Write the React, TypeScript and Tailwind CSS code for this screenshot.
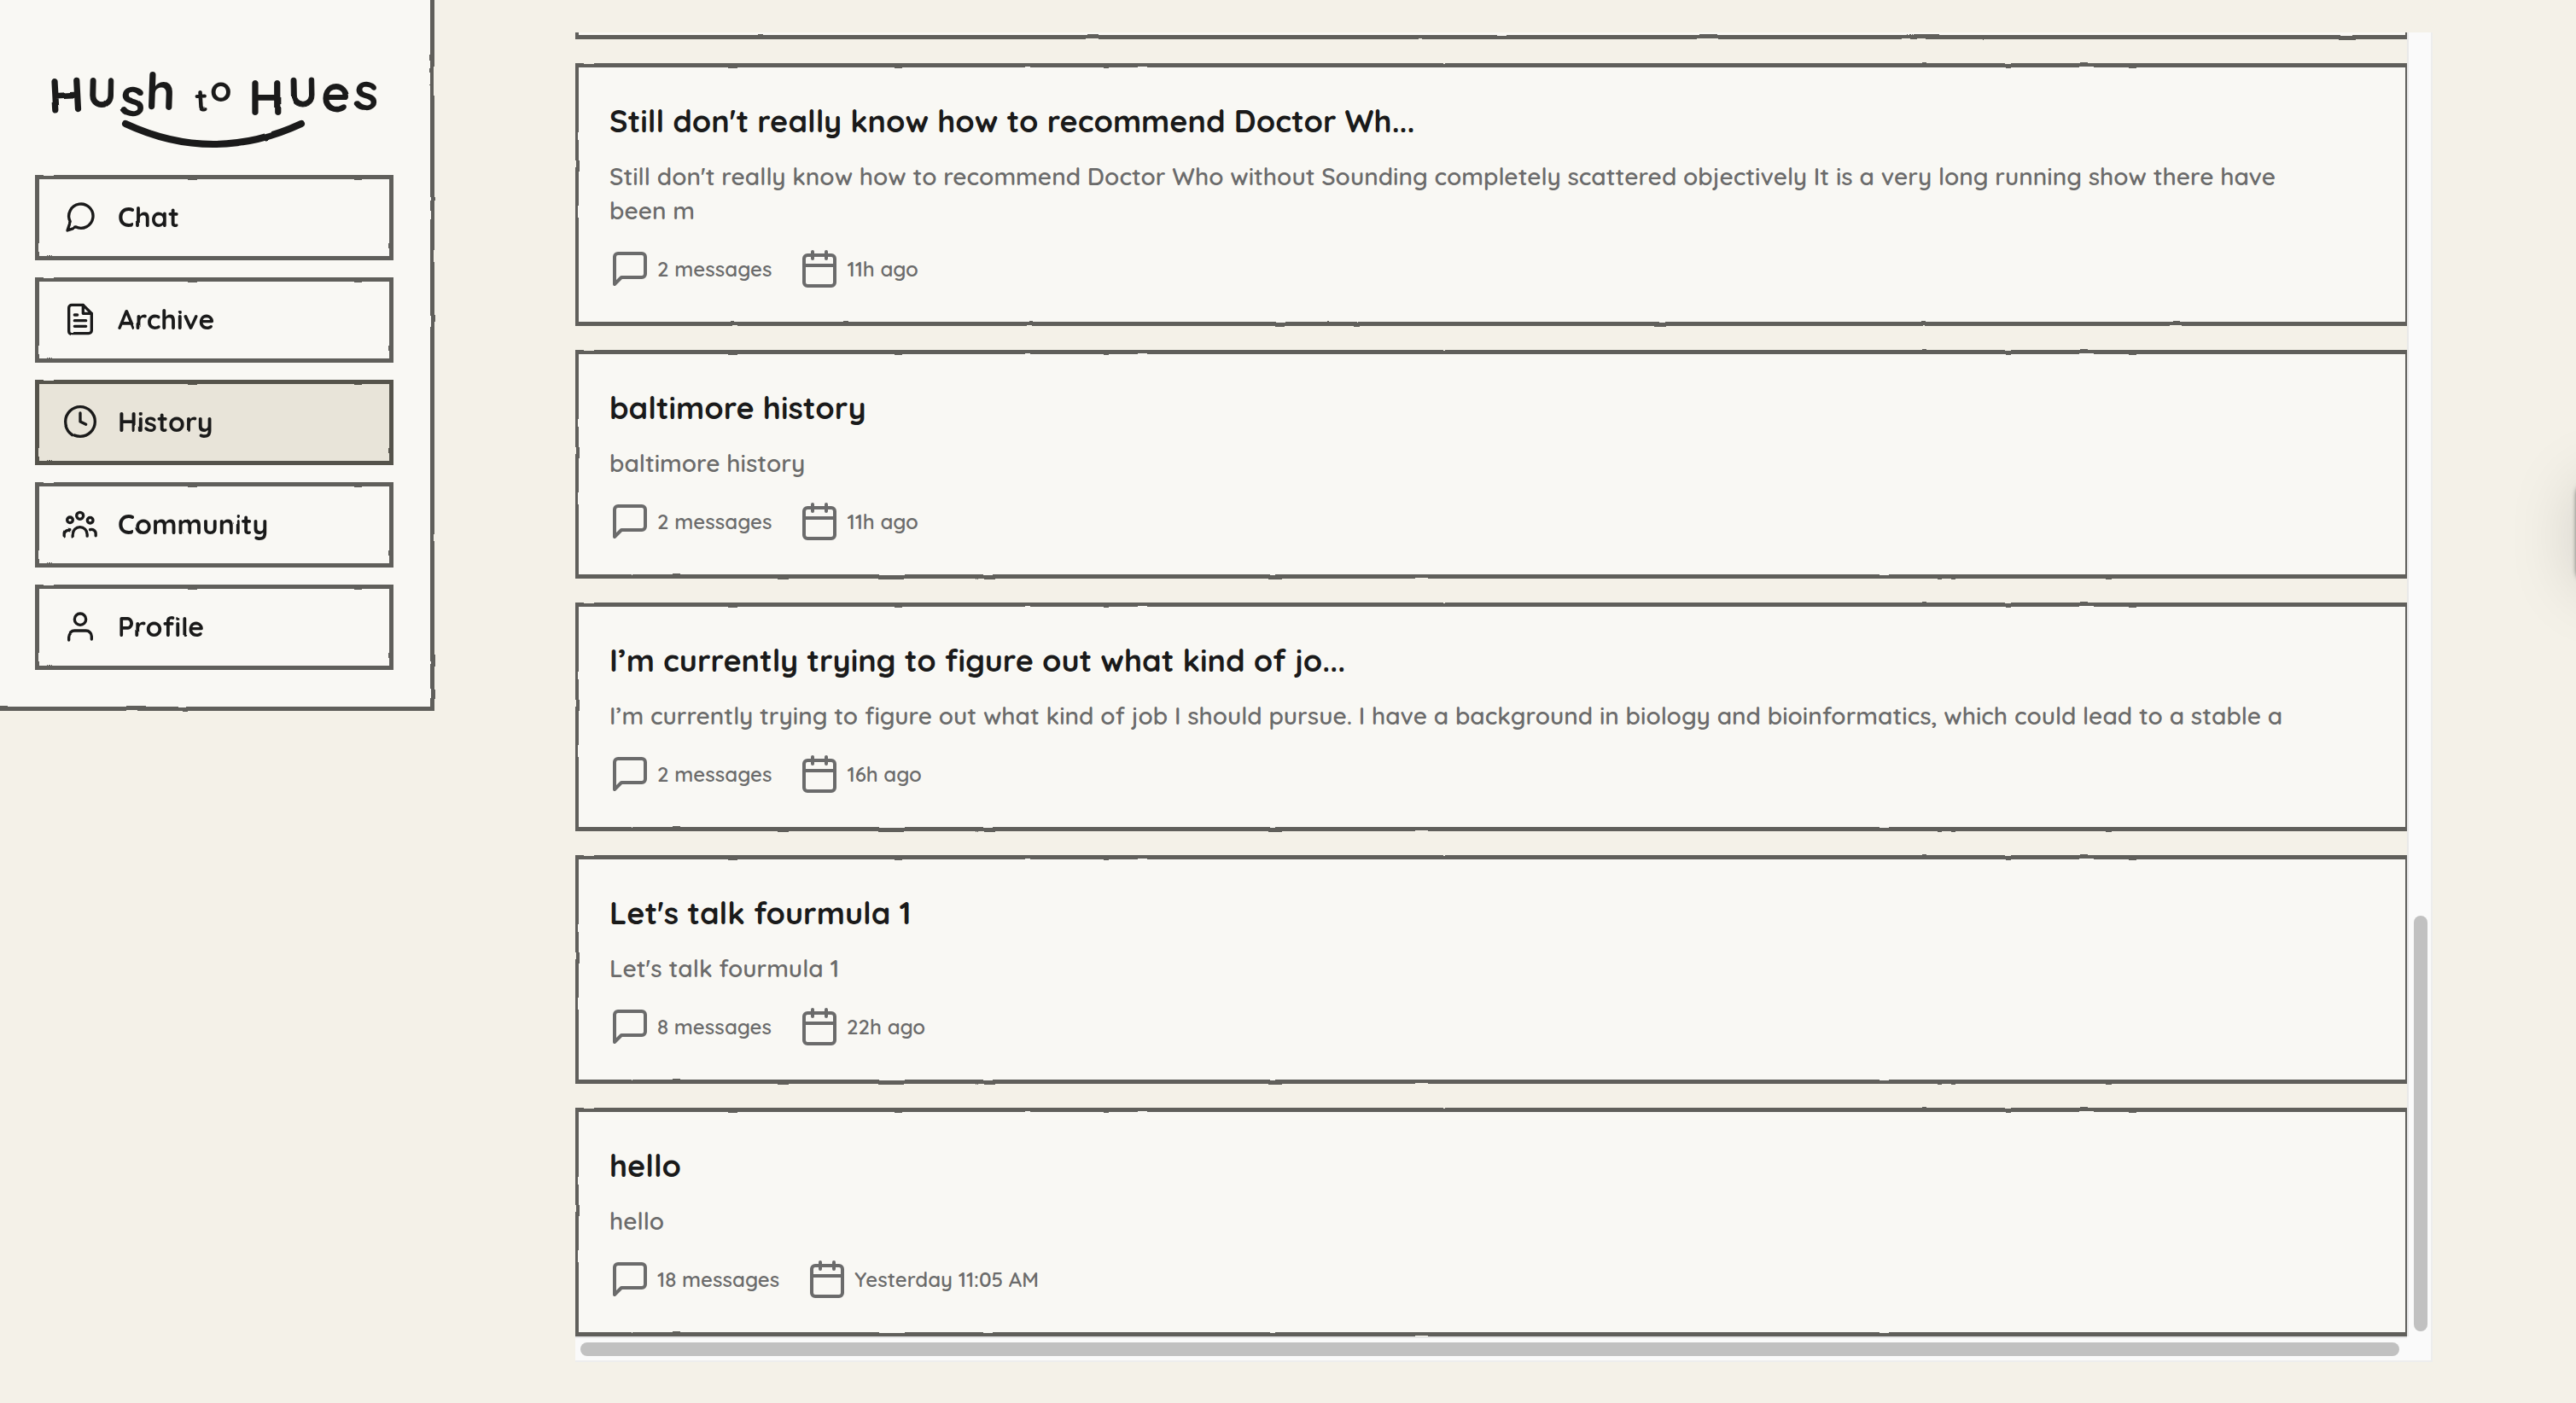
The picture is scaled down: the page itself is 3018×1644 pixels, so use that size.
import type { ReactNode } from "react"

interface NavItem {
  label: string
  icon: ReactNode
  active?: boolean
}

interface Conversation {
  title: string
  preview: string
  messages: string
  time: string
}

const navItems: NavItem[] = [
  { label: "Chat", icon: <path d="m3 21 1.9-5.7a8.5 8.5 0 1 1 3.8 3.8z" /> },
  {
    label: "Archive",
    icon: (
      <>
        <path d="M14 2H6a2 2 0 0 0-2 2v16a2 2 0 0 0 2 2h12a2 2 0 0 0 2-2V8z" />
        <path d="M14 2v6h6M8 9h2M8 13h8M8 17h8" />
      </>
    ),
  },
  {
    label: "History",
    active: true,
    icon: (
      <>
        <circle cx="12" cy="12" r="10.4" />
        <path d="M12 6v6l4 2" />
      </>
    ),
  },
  {
    label: "Community",
    icon: (
      <>
        <circle cx="11.8" cy="6.2" r="2.4" />
        <circle cx="4.8" cy="9.2" r="2" />
        <circle cx="19" cy="9.4" r="2" />
        <path d="M6.7 20.5v-1.2a5 5 0 0 1 10.2 0v1.2" />
        <path d="M.7 20.3v-1.3a3 3 0 0 1 4-3M22.9 20.3v-1.3a3 3 0 0 0-4-3" />
      </>
    ),
  },
  {
    label: "Profile",
    icon: (
      <>
        <path d="M20 21v-2a4 4 0 0 0-4-4H8a4 4 0 0 0-4 4v2" />
        <circle cx="12" cy="7" r="4" />
      </>
    ),
  },
]

const conversations: Conversation[] = [
  {
    title: "Still don't really know how to recommend Doctor Wh...",
    preview:
      "Still don't really know how to recommend Doctor Who without Sounding completely scattered objectively It is a very long running show there have been m",
    messages: "2 messages",
    time: "11h ago",
  },
  { title: "baltimore history", preview: "baltimore history", messages: "2 messages", time: "11h ago" },
  {
    title: "I’m currently trying to figure out what kind of jo...",
    preview:
      "I’m currently trying to figure out what kind of job I should pursue. I have a background in biology and bioinformatics, which could lead to a stable a",
    messages: "2 messages",
    time: "16h ago",
  },
  { title: "Let's talk fourmula 1", preview: "Let's talk fourmula 1", messages: "8 messages", time: "22h ago" },
  { title: "hello", preview: "hello", messages: "18 messages", time: "Yesterday 11:05 AM" },
]

// Each letter of the wordmark sits at its own height and tilt
const logoLetters = [
  { char: "H", x: 17, y: 82, size: 58, tilt: -3 },
  { char: "U", x: 61, y: 74, size: 48, tilt: 1 },
  { char: "s", x: 99, y: 84, size: 62, tilt: 2 },
  { char: "h", x: 129, y: 77, size: 60, tilt: 2 },
  { char: "t", x: 188, y: 80, size: 38, tilt: -3 },
  { char: "o", x: 205, y: 68, size: 41, tilt: 0 },
  { char: "H", x: 250, y: 84, size: 58, tilt: 0 },
  { char: "U", x: 297, y: 74, size: 48, tilt: -1 },
  { char: "e", x: 335, y: 80, size: 60, tilt: 0 },
  { char: "s", x: 373, y: 77, size: 60, tilt: 2 },
]

function RoughFilters() {
  return (
    <svg className="absolute h-0 w-0" aria-hidden="true">
      <filter id="rough" x="-2%" y="-2%" width="104%" height="104%" colorInterpolationFilters="sRGB">
        <feTurbulence type="fractalNoise" baseFrequency="0.02" numOctaves="3" seed="2" result="noise" />
        <feDisplacementMap in="SourceGraphic" in2="noise" scale="2" xChannelSelector="R" yChannelSelector="G" />
      </filter>
    </svg>
  )
}

function Logo() {
  return (
    <svg
      viewBox="0 0 420 140"
      className="h-[140px] w-[420px] [filter:url(#rough)]"
      role="img"
      aria-label="Hush to Hues"
    >
      <g className="fill-[#1a1a1a] font-bold">
        {logoLetters.map((l, i) => (
          <text
            key={i}
            fontSize={l.size}
            stroke="#1a1a1a"
            strokeWidth={l.char === "U" ? 1 : 0}
            transform={`translate(${l.x} ${l.y}) rotate(${l.tilt})`}
          >
            {l.char}
          </text>
        ))}
      </g>
      <path d="M106 94Q209 142 312 94" fill="none" stroke="#1a1a1a" strokeWidth="8" strokeLinecap="round" />
    </svg>
  )
}

function NavButton({ item }: { item: NavItem }) {
  return (
    <button
      type="button"
      className={`flex h-[100px] w-full items-center gap-6 border-[5px] px-7 pb-[2px] text-left text-[32px] font-bold text-[#1a1a1a] [filter:url(#rough)] ${
        item.active ? "border-[#55534b] bg-[#e8e4d9]" : "border-[#605f5b] bg-[#f9f8f4]"
      }`}
    >
      <svg
        viewBox="0 0 24 24"
        className="size-10 shrink-0 overflow-visible fill-none stroke-current stroke-2"
        strokeLinecap="round"
        strokeLinejoin="round"
        aria-hidden="true"
      >
        {item.icon}
      </svg>
      {item.label}
    </button>
  )
}

function Sidebar() {
  return (
    <aside className="relative w-[509px] shrink-0 self-start">
      <div className="absolute -top-3 right-0 bottom-0 -left-3 border-[5px] border-[#605f5b] bg-[#f9f8f4] [filter:url(#rough)]" />
      <div className="relative px-[41px] pt-[51px] pb-[48px]">
        <Logo />
        <nav className="mt-[14px] flex w-[420px] flex-col gap-5">
          {navItems.map((item) => (
            <NavButton key={item.label} item={item} />
          ))}
        </nav>
      </div>
    </aside>
  )
}

function CardFrame({ children }: { children?: ReactNode }) {
  return (
    <article className="relative w-[calc(100%+2px)] shrink-0 border-x-4 border-y-[5px] border-transparent px-9 pt-9 pb-[38px]">
      <div className="absolute -inset-x-1 -inset-y-[5px] border-x-4 border-y-[5px] border-[#605f5b] bg-[#f9f8f4] [filter:url(#rough)]" />
      <div className="relative">{children}</div>
    </article>
  )
}

function MetaIcon({ children }: { children: ReactNode }) {
  return (
    <svg
      viewBox="0 0 24 24"
      className="size-12 fill-none stroke-current stroke-2"
      strokeLinecap="round"
      strokeLinejoin="round"
      aria-hidden="true"
    >
      {children}
    </svg>
  )
}

function ConversationCard({ conversation }: { conversation: Conversation }) {
  return (
    <CardFrame>
      <h3 className="text-[36px] leading-[54px] font-bold text-[#1a1a1a]">{conversation.title}</h3>
      <p className="mt-[18px] pr-24 text-[28px] leading-10 font-semibold text-[#6b6b6b]">{conversation.preview}</p>
      <div className="mt-6 flex items-center gap-8 text-[24px] leading-8 font-semibold text-[#6b6b6b]">
        <span className="flex items-center gap-2">
          <MetaIcon>
            <path d="M21 15a2 2 0 0 1-2 2H7l-4 4V5a2 2 0 0 1 2-2h14a2 2 0 0 1 2 2z" />
          </MetaIcon>
          {conversation.messages}
        </span>
        <span className="flex items-center gap-2">
          <MetaIcon>
            <rect x="3" y="4" width="18" height="18" rx="2" />
            <path d="M16 2v4M8 2v4M3 10h18" />
          </MetaIcon>
          {conversation.time}
        </span>
      </div>
    </CardFrame>
  )
}

export default function App() {
  return (
    <div className="relative flex h-screen overflow-hidden bg-[#f4f1e8] font-['Quicksand','Lato',sans-serif]">
      <RoughFilters />
      <Sidebar />

      <main className="grid min-w-0 flex-1 grid-cols-[minmax(0,1fr)_30px] grid-rows-[minmax(0,1fr)_30px] pt-[38px] pr-[168px] pb-12 pl-[165px]">
        <section className="flex min-h-0 flex-col justify-end gap-7 overflow-hidden">
          <CardFrame />
          {conversations.map((c) => (
            <ConversationCard key={c.title} conversation={c} />
          ))}
        </section>

        {/* Scroll tracks */}
        <div className="flex flex-col justify-end border-x-2 border-l-[#e8e8e8] border-r-[#ededed] bg-[#fafafa] px-[6px] pb-[6px]">
          <div className="h-[32%] w-4 rounded-full bg-[#c1c1c1]" />
        </div>
        <div className="flex items-center border-y-2 border-t-[#e8e8e8] border-b-[#ededed] bg-[#fafafa] pr-[9px] pl-[6px]">
          <div className="h-4 w-full rounded-full bg-[#c1c1c1]" />
        </div>
        <div className="border-r-2 border-b-2 border-[#ededed] bg-[#fafafa]" />
      </main>

      {/* Drawer handle parked past the right edge */}
      <div className="absolute top-[564px] -right-[100px] h-[120px] w-[100px] rounded-2xl bg-[#f9f8f4] shadow-[0_4px_80px_rgba(0,0,0,0.15),0_0_5px_rgba(0,0,0,0.5)]" />
    </div>
  )
}
